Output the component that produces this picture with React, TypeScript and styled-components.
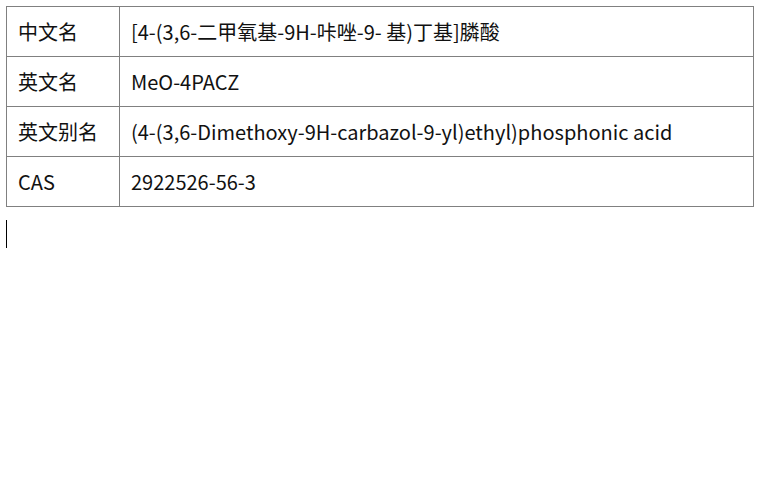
import React from 'react';
import styled, { createGlobalStyle } from 'styled-components';

const GlobalStyle = createGlobalStyle`
  html, body {
    margin: 0;
    padding: 0;
    background: #ffffff;
  }
  body {
    font-family: 'Noto Sans CJK SC', 'Noto Sans', sans-serif;
    color: #111111;
  }
`;

const Page = styled.div`
  padding: 6px;
`;

const InfoTable = styled.table`
  width: 748px;
  border-collapse: collapse;
  font-size: 20px;
  line-height: 29px;
`;

const Cell = styled.td<{ $label?: boolean }>`
  border: 1px solid #808080;
  padding: 10px 11px;
  height: 29px;
  width: ${props => (props.$label ? '90px' : 'auto')};
  white-space: nowrap;
  vertical-align: middle;
`;

const Caret = styled.div`
  width: 1px;
  height: 28px;
  margin-top: 13px;
  background: #000000;
`;

const rows: [string, string][] = [
  ['中文名', '[4-(3,6-二甲氧基-9H-咔唑-9- 基)丁基]膦酸'],
  ['英文名', 'MeO-4PACZ'],
  ['英文别名', '(4-(3,6-Dimethoxy-9H-carbazol-9-yl)ethyl)phosphonic acid'],
  ['CAS', '2922526-56-3'],
];

const App: React.FC = () => {
  return (
    <Page>
      <GlobalStyle />
      <InfoTable>
        <tbody>
          {rows.map(([label, value]) => (
            <tr key={label}>
              <Cell $label>{label}</Cell>
              <Cell>{value}</Cell>
            </tr>
          ))}
        </tbody>
      </InfoTable>
      <Caret />
    </Page>
  );
};

export default App;
